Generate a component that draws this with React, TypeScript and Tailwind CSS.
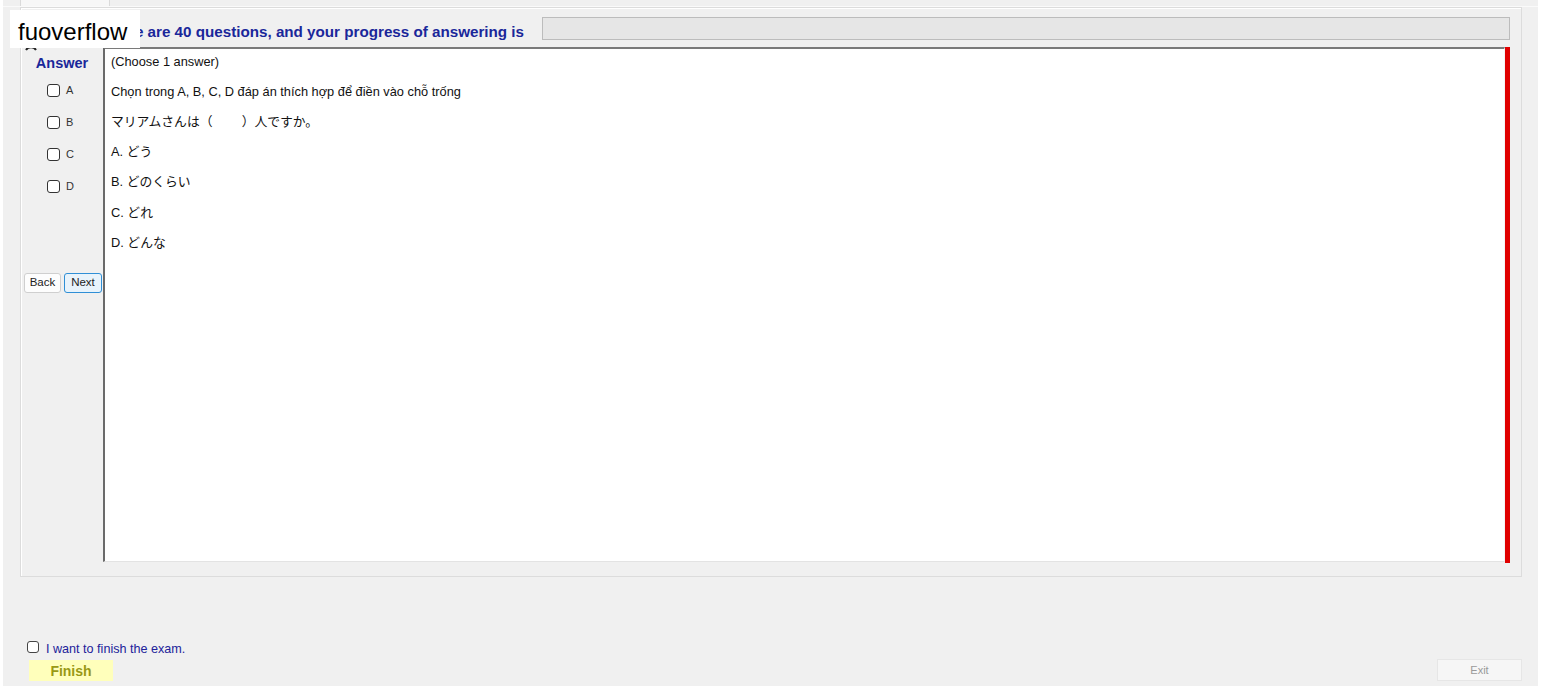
import React from "react";

const Box = () => (
  <span className="inline-block w-[13px] h-[13px] rounded-[3px] border border-[#333333] bg-white shrink-0" />
);

const lines = [
  "(Choose 1 answer)",
  "Chọn trong A, B, C, D đáp án thích hợp để điền vào chỗ trống",
  "マリアムさんは（　　 ）人ですか。",
  "A. どう",
  "B. どのくらい",
  "C. どれ",
  "D. どんな",
];

export default function App() {
  return (
    <div className="relative w-[1542px] h-[690px] bg-white font-['Liberation_Sans','Noto_Sans_CJK_JP',sans-serif] overflow-hidden">
      <div className="ml-[3px] w-[1535px] h-[686px] bg-[#f0f0f0] flex flex-col">
        {/* tab strip */}
        <div className="h-[7px] flex items-end border-b border-[#fafafa]">
          <div className="ml-[17px] w-[90px] h-[7px] bg-[#f7f7f7] border-x border-[#dadada]" />
        </div>
        {/* group box */}
        <div className="ml-[17px] w-[1502px] h-[570px] border border-[#dcdcdc] shadow-[inset_1px_1px_0_#ffffff] flex flex-col">
          <div className="mt-[9px] h-[23px] flex items-start">
            <span className="ml-[81px] mt-[7px] text-[15.2px] font-bold text-[#1a279a] whitespace-nowrap leading-none">
              There are 40 questions, and your progress of answering is
            </span>
            <div className="ml-[18px] mr-[11px] flex-1 h-[23px] bg-[#e6e6e6] border border-[#bcbcbc]" />
          </div>
          <div className="mt-[7px] flex">
            <div className="w-[82px] flex flex-col">
              <div className="mt-[8px] h-[16px] flex items-center justify-center text-[14.5px] font-bold text-[#1a279a] leading-none">
                Answer
              </div>
              <div className="mt-[3px] flex flex-col">
                {["A", "B", "C", "D"].map((l) => (
                  <div key={l} className="h-[32px] flex items-center pl-[26px] gap-[6px]">
                    <Box />
                    <span className="text-[11px] text-[#333333] leading-none">{l}</span>
                  </div>
                ))}
              </div>
              <div className="mt-[71px] flex pl-[3px] gap-[3px]">
                <button className="w-[37px] h-[20px] bg-[#fdfdfd] border border-[#cfcfcf] rounded-[3px] text-[11.5px] text-[#222222] leading-none">
                  Back
                </button>
                <button className="w-[38px] h-[20px] bg-[#e8f3fb] border border-[#2f8fd6] rounded-[3px] text-[11.5px] text-[#222222] leading-none">
                  Next
                </button>
              </div>
            </div>
            <div className="w-[1402px] h-[515px] bg-white border-l-2 border-t-2 border-l-[#6a6a6a] border-t-[#7a7a7a] border-r border-b border-r-[#f4f4f4] border-b-[#e3e3e3]">
              <div className="-mt-[2px] pl-[6px] flex flex-col">
                {lines.map((t, i) => (
                  <div key={i} className="h-[30.2px] flex items-center text-[12.8px] text-[#111111] whitespace-pre leading-none">
                    {t}
                  </div>
                ))}
              </div>
            </div>
            <div className="w-[5px] h-[516px] bg-[#e00000]" />
          </div>
        </div>
        {/* bottom */}
        <div className="mt-[63px] h-[14px] flex items-center pl-[24px] gap-[7px]">
          <span className="inline-block w-[12px] h-[12px] rounded-[3px] border border-[#444444] bg-white" />
          <span className="mt-[4px] text-[12.6px] text-[#22229a] leading-none">I want to finish the exam.</span>
        </div>
        <div className="mt-[5px] flex items-start">
          <button className="ml-[26px] mt-[1px] w-[84px] h-[21px] bg-[#ffffbb] text-[14px] font-bold text-[#999915] leading-none">
            Finish
          </button>
          <button className="ml-auto mr-[16px] w-[85px] h-[22px] bg-[#f6f6f6] border border-[#e6e6e6] text-[11px] text-[#9a9a9a] leading-none">
            Exit
          </button>
        </div>
      </div>
      {/* watermark overlay */}
      <svg className="absolute left-[24px] top-[44px]" width="14" height="8" viewBox="0 0 14 8">
        <path d="M2 6 A6 6 0 0 1 12 6" stroke="#222" strokeWidth="2" fill="none" />
      </svg>
      <div className="absolute left-[10px] top-[10px] w-[130px] h-[38px] bg-white flex items-center pl-[8px] pt-[5px] text-[24px] text-black font-['Liberation_Sans',sans-serif] leading-none">
        fuoverflow
      </div>
    </div>
  );
}
